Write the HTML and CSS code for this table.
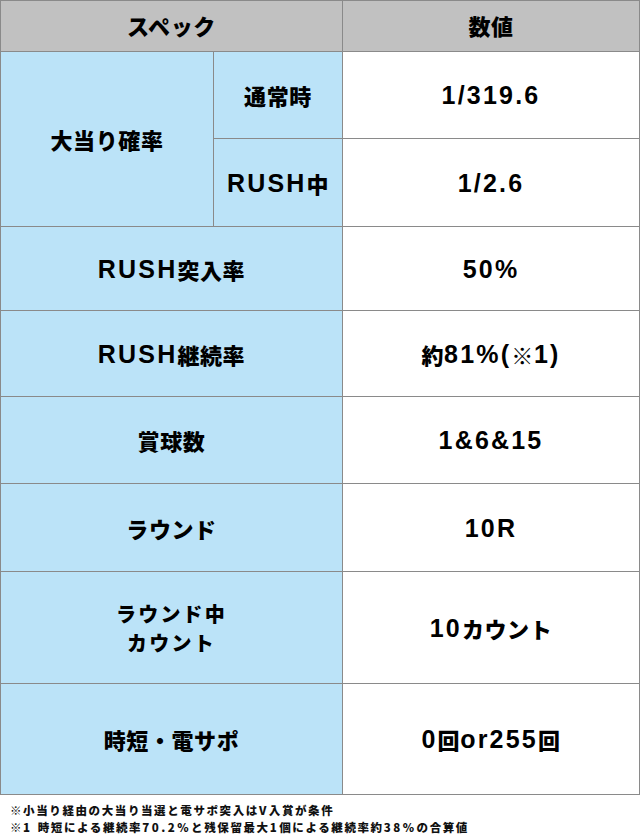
FILE: index.html
```html
<!DOCTYPE html>
<html lang="ja">
<head>
<meta charset="utf-8">
<title>スペック</title>
<link rel="stylesheet" href="styles.css">
</head>
<body>
<div class="spec">
  <div class="cell head span2">スペック</div>
  <div class="cell head">数値</div>

  <div class="cell label rows2">大当り確率</div>
  <div class="cell label">通常時</div>
  <div class="cell value"><span class="l">1/319.6</span></div>
  <div class="cell label"><span class="l">RUSH</span>中</div>
  <div class="cell value"><span class="l">1/2.6</span></div>

  <div class="cell label span2"><span class="l">RUSH</span>突入率</div>
  <div class="cell value"><span class="l">50%</span></div>

  <div class="cell label span2"><span class="l">RUSH</span>継続率</div>
  <div class="cell value">約<span class="l">81%(</span>※<span class="l">1)</span></div>

  <div class="cell label span2">賞球数</div>
  <div class="cell value"><span class="l">1&amp;6&amp;15</span></div>

  <div class="cell label span2">ラウンド</div>
  <div class="cell value"><span class="l">10R</span></div>

  <div class="cell label span2 two">ラウンド中<br>カウント</div>
  <div class="cell value"><span class="l">10</span>カウント</div>

  <div class="cell label span2">時短・電サポ</div>
  <div class="cell value"><span class="l">0</span>回<span class="l">or255</span>回</div>
</div>
<div class="notes">
  <p>※小当り経由の大当り当選と電サポ突入は<span class="fl">V</span>入賞が条件</p>
  <p>※<span class="fl">1 </span>時短による継続率<span class="fl">70.2%</span>と残保留最大<span class="fl">1</span>個による継続率約<span class="fl">38%</span>の合算値</p>
</div>
</body>
</html>
```

FILE: styles.css
```css
html, body {
  margin: 0;
  padding: 0;
  background: #ffffff;
}

body {
  width: 640px;
  font-family: "Noto Sans CJK JP", sans-serif;
  font-weight: 900;
  color: #000000;
}

.spec {
  display: grid;
  grid-template-columns: 212px 128px 296px;
  grid-template-rows: 50px 86px 87px 83px 85px 86px 87px 111px 110px;
  gap: 1px;
  padding: 1px;
  background: #8a8a8a;
  width: 640px;
  box-sizing: border-box;
}

.cell {
  display: flex;
  align-items: center;
  justify-content: center;
  text-align: center;
  font-size: 22px;
  line-height: 32px;
  letter-spacing: 0.6px;
}

.head {
  background: #c1c1c1;
  padding-bottom: 2px;
  box-sizing: border-box;
}

.label {
  background: #bbe3f8;
}

.value {
  background: #ffffff;
}

.span2 {
  grid-column: span 2;
}

.rows2 {
  grid-row: span 2;
}

.two {
  font-size: 20px;
  line-height: 29px;
  letter-spacing: 2.2px;
}

.l {
  font-family: "Liberation Sans", Arial, sans-serif;
  font-weight: 700;
  font-size: 25px;
  letter-spacing: 2.2px;
}

.notes {
  padding: 7px 0 0 10px;
}

.notes p {
  margin: 0;
  font-size: 11.5px;
  line-height: 16.7px;
  color: #111111;
  letter-spacing: 1.6px;
}

.fl {
  letter-spacing: 2.5px;
}
```
